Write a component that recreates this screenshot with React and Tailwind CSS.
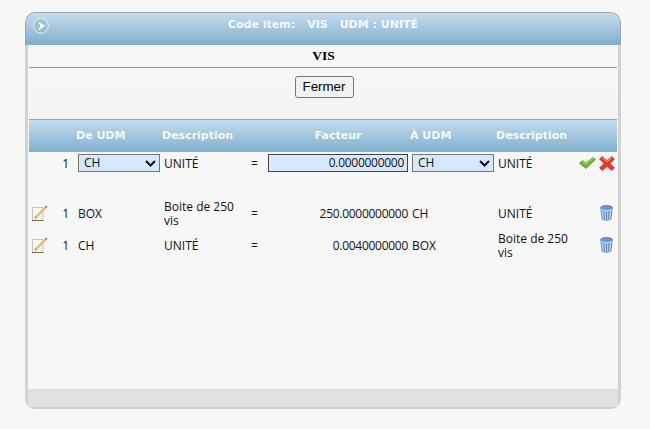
const rowGrid =
  "grid grid-cols-[29px_12px_8px_86px_86px_18px_144px_86px_78px_1fr] items-center";

const PencilIcon = () => (
  <svg width="16" height="16" viewBox="0 0 16 16">
    <path d="M0.5 2.5h10.5v13H0.5z" fill="#f6f6f6" stroke="#c4c4c4" strokeWidth="1" />
    <path d="M0 15.5h11.5" stroke="#666" strokeWidth="1" />
    <path d="M3.4 11.6 L12.9 2 L14 3.1 L4.5 12.8 L2.8 13.4z" fill="#f4bb3a" stroke="#d2962a" strokeWidth="0.4" />
    <path d="M12.8 2.1 L14.4 0.5 L15.6 1.6 L14 3.2z" fill="#c8663a" />
    <path d="M3.4 11.6 L2.8 13.4 L4.5 12.8z" fill="#7a6a4a" />
  </svg>
);

const TrashIcon = () => (
  <svg width="13" height="16" viewBox="0 0 13 16">
    <ellipse cx="6.5" cy="2.6" rx="5.8" ry="2.1" fill="#6a97d4" stroke="#4a74ae" strokeWidth="0.8" />
    <path d="M0.8 3 L2 14.2 Q6.5 16.6 11 14.2 L12.2 3 Q6.5 6 0.8 3z" fill="#b4cdf0" stroke="#5a84bc" strokeWidth="0.8" />
    <path d="M4 6.2 L4.5 13.8M6.5 6.6 V14.4M9 6.2 L8.5 13.8" stroke="#5a84bc" strokeWidth="1" />
  </svg>
);

const CheckIcon = () => (
  <svg width="17" height="12" viewBox="0 0 17 12">
    <path d="M0.5 6.3 L3.4 3.6 L6.8 6 L14 0.5 L16.5 2.4 L7 11.5z" fill="#62b834" stroke="#4a9a2a" strokeWidth="0.7" />
    <path d="M3.4 4.7 L6.8 7.2 L14 1.7" fill="none" stroke="#b4e68c" strokeWidth="1" />
  </svg>
);

const CrossIcon = () => (
  <svg width="16" height="15" viewBox="0 0 16 15">
    <path d="M3.2 0.5 L8 4.4 L12.8 0.5 L15.5 3 L11.2 7.5 L15.5 12 L12.8 14.5 L8 10.5 L3.2 14.5 L0.5 12 L4.8 7.5 L0.5 3z" fill="#e8362c" stroke="#b82a22" strokeWidth="0.6" />
    <path d="M3.2 1.8 L8 5.7 L12.8 1.8" fill="none" stroke="#f79a90" strokeWidth="1" />
  </svg>
);

const ArrowCircle = () => (
  <svg width="16" height="16" viewBox="0 0 16 16">
    <circle cx="8" cy="8" r="7.3" fill="#9cbfd8" stroke="#eef5fa" strokeWidth="0.9" />
    <path d="M4.6 3.6 L12.4 7.8 L5 12.6 L7.4 7.8z" fill="#fff" />
  </svg>
);

const UdmSelect = () => (
  <div className="flex items-center justify-between w-[82px] h-[18px] border border-[#767676] bg-[#d6e8fe] pl-[5px] pr-[3px]">
    <span>CH</span>
    <svg width="11" height="7" viewBox="0 0 11 7">
      <path d="M1 1 L5.5 5.5 L10 1" fill="none" stroke="#111" strokeWidth="2" />
    </svg>
  </div>
);

const DataRow = ({ from, fromDesc, factor, to, toDesc }) => (
  <div className={`${rowGrid} h-[32px] shrink-0 leading-[14px]`}>
    <div className="pl-[3px] flex">
      <PencilIcon />
    </div>
    <div className="text-right pr-[1px] pt-[2px]">1</div>
    <div />
    <div className="pt-[2px]">{from}</div>
    <div className="pt-[2px] pr-[4px]">{fromDesc}</div>
    <div className="pl-[1px] pt-[2px]">=</div>
    <div className="text-right pr-[4px] pt-[2px] tracking-[-0.28px]">{factor}</div>
    <div className="pt-[2px]">{to}</div>
    <div className="pt-[2px] pr-[4px]">{toDesc}</div>
    <div className="flex justify-end pr-[4px]">
      <TrashIcon />
    </div>
  </div>
);

export default function App() {
  return (
    <div className="w-[650px] h-[429px] bg-[#f7f7f7] pt-[12px] pl-[25px] font-['Open_Sans','Liberation_Sans',sans-serif] text-[12px] text-[#111]">
      <div className="w-[596px] h-[397px] flex flex-col rounded-[10px] overflow-hidden">
        <header className="h-[33px] shrink-0 relative flex justify-center pt-[4px] gap-[12px] border-t-[1.5px] border-x border-[#a3a3a3] border-b-0 rounded-t-[10px] bg-gradient-to-b from-[#c6dded] to-[#7fafcf] font-['DejaVu_Sans',sans-serif] font-bold text-[11px] text-[#f4f8fb]">
          <span className="absolute left-[7px] top-[4.5px]">
            <ArrowCircle />
          </span>
          <span>Code item:</span>
          <span>VIS</span>
          <span>UDM : UNITÉ</span>
        </header>
        <div className="flex-1 flex flex-col border-x-[3px] border-[#d2d2d2] bg-[#f7f7f7]">
          <div className="flex-1 flex flex-col px-[1px]">
            <h1 className="h-[23px] shrink-0 flex items-center justify-center pl-[1px] border-b border-[#999] font-['Liberation_Serif',serif] font-bold text-[13.5px] text-black">
              VIS
            </h1>
            <div className="flex justify-center pt-[8px] pl-[2px] h-[51px] shrink-0 bg-gradient-to-b from-[#f7f7f7] to-[#f3f3f3]">
              <button className="w-[59px] h-[22px] rounded-[3px] border border-[#767676] bg-[#f2f2f2] font-['Liberation_Sans',sans-serif] text-[13.33px] leading-none text-black">
                Fermer
              </button>
            </div>
            <div
              className={`${rowGrid} h-[33px] shrink-0 pt-[1px] border-t border-[#a3a3a3] bg-gradient-to-b from-[#c6dded] to-[#7fafcf] font-['DejaVu_Sans',sans-serif] font-bold text-[11px] text-[#f4f8fb]`}
            >
              <div className="col-start-4 -ml-[2px]">De UDM</div>
              <div className="-ml-[2px] whitespace-nowrap">Description</div>
              <div className="col-start-7 text-center -ml-[4px]">Facteur</div>
              <div className="-ml-[2px]">À UDM</div>
              <div className="-ml-[2px] whitespace-nowrap">Description</div>
            </div>
            <div className={`${rowGrid} h-[22px] shrink-0`}>
              <div />
              <div className="text-right pr-[1px] pt-[1px]">1</div>
              <div />
              <UdmSelect />
              <div className="pt-[1px]">UNITÉ</div>
              <div className="pl-[1px] pt-[1px]">=</div>
              <div className="w-[140px] h-[18px] flex items-center justify-end pr-[3px] border border-[#444] bg-[#d6e8fe] tracking-[-0.28px]">
                0.0000000000
              </div>
              <UdmSelect />
              <div className="pt-[1px]">UNITÉ</div>
              <div className="flex items-center gap-[3px] pl-[3px]">
                <CheckIcon />
                <CrossIcon />
              </div>
            </div>
            <div className="h-[23px] shrink-0" />
            <DataRow from="BOX" fromDesc="Boite de 250 vis" factor="250.0000000000" to="CH" toDesc="UNITÉ" />
            <DataRow from="CH" fromDesc="UNITÉ" factor="0.0040000000" to="BOX" toDesc="Boite de 250 vis" />
          </div>
          <footer className="h-[20px] shrink-0 bg-[#e0e0e0] border-b-2 border-[#cfcfcf]" />
        </div>
      </div>
    </div>
  );
}
